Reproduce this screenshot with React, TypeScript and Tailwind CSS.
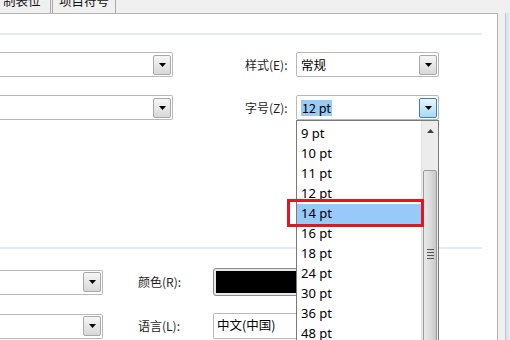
import React from "react";

const cjk = "font-['Microsoft_YaHei','Noto_Sans_CJK_SC',sans-serif]";

function Arrow({ up = false }: { up?: boolean }) {
  return (
    <svg width="7" height="4" viewBox="0 0 7 4" className="block">
      {up ? <path d="M0 4 L3.5 0 L7 4 Z" fill="#404040" /> : <path d="M0 0 L7 0 L3.5 4 Z" fill="#000" />}
    </svg>
  );
}

function DropButton({ hot = false }: { hot?: boolean }) {
  return (
    <div
      className={
        hot
          ? "w-[18px] h-[20px] flex items-center justify-center border border-[#3c7fb1] rounded-[2px] bg-gradient-to-b from-[#eaf6fd] to-[#a7d9f5]"
          : "w-[18px] h-[20px] flex items-center justify-center border border-[#a8a8a8] rounded-[2px] bg-gradient-to-b from-[#f6f6f6] to-[#d8d8d8]"
      }
    >
      <Arrow />
    </div>
  );
}

function Combo({
  className,
  text,
  hot = false,
  selected = false,
  noLeft = false,
}: {
  className: string;
  text?: string;
  hot?: boolean;
  selected?: boolean;
  noLeft?: boolean;
}) {
  return (
    <div
      className={`${className} h-[25px] flex items-center justify-between bg-white border border-[#b9b9b9] rounded-[2px] pr-[1px] ${
        noLeft ? "border-l-0 rounded-l-none" : ""
      }`}
    >
      <span className={`ml-[4px] text-[12.5px] leading-[16px] text-black ${cjk} ${selected ? "bg-[#99cbf6] px-[1px]" : ""}`}>
        {text}
      </span>
      <DropButton hot={hot} />
    </div>
  );
}

const sizes = ["9 pt", "10 pt", "11 pt", "12 pt", "14 pt", "16 pt", "18 pt", "24 pt", "30 pt", "36 pt", "48 pt"];

export default function App() {
  return (
    <div className={`w-[510px] h-[340px] relative overflow-hidden bg-[#f0f0f0] ${cjk}`}>
      {/* tabs, cut off at the top of the shot */}
      <div className="h-[13px] flex overflow-hidden">
        <div className="w-[51px] h-[13px] border-r border-[#a9a9a9] relative bg-[#f0f0f0]">
          <span className="absolute left-[3px] top-[-6px] text-[12.5px] leading-[14px] text-[#111]">制表位</span>
        </div>
        <div className="w-[64px] h-[13px] border-x border-[#a9a9a9] ml-[1px] relative bg-[#f0f0f0]">
          <span className="absolute left-[6px] top-[-6px] text-[12.5px] leading-[14px] text-[#111]">项目符号</span>
        </div>
      </div>

      <div className="flex">
        {/* panel */}
        <div className="w-[498px] h-[327px] bg-white border-t border-r border-[#b4b4b4] flex flex-col">
          <div className="h-[19px]" />
          <div className="w-[482px] h-[2px] bg-[#e5eaf0]" />

          <div className="mt-[17px] flex items-center">
            <Combo className="w-[173px]" noLeft />
            <span className="ml-[72px] w-[51px] text-[12px] text-[#1e1e1e]">样式(E):</span>
            <Combo className="w-[143px]" text="常规" />
          </div>

          <div className="mt-[18px] flex items-center">
            <Combo className="w-[173px]" noLeft />
            <span className="ml-[72px] w-[51px] text-[12px] text-[#1e1e1e]">字号(Z):</span>
            <Combo className="w-[143px]" text="12 pt" hot selected />
          </div>

          <div className="h-[127px]" />
          <div className="w-[482px] h-[2px] bg-[#e5eaf0]" />

          <div className="mt-[19px] flex items-center">
            <Combo className="w-[103px]" noLeft />
            <span className="ml-[35px] w-[75px] text-[12px] text-[#1e1e1e]">颜色(R):</span>
            <div className="w-[100px] h-[28px] border border-[#8a8a8a] rounded-[3px] p-[2px] bg-[#e8e8e8]">
              <div className="w-full h-full bg-black" />
            </div>
          </div>

          <div className="mt-[17px] flex items-center">
            <Combo className="w-[103px]" noLeft />
            <span className="ml-[35px] w-[75px] text-[12px] text-[#1e1e1e]">语言(L):</span>
            <div className="w-[100px] h-[26px] border border-[#b9b9b9] rounded-[2px] bg-white pl-[3px] text-[12.5px] leading-[22px] text-black">
              中文(中国)
            </div>
          </div>
        </div>
        <div className="w-[8px] border-r border-[#c4c4c4]" />
        <div className="w-[3px] bg-[#dbe6f2]" />
      </div>

      {/* dropdown list */}
      <div className="absolute left-[296px] top-[120px] w-[143px] h-[230px] bg-white border border-[#7a7a7a] flex">
        <div className="flex-1 flex flex-col pt-[3px]">
          {sizes.map((s) => (
            <div
              key={s}
              className={`h-[20px] pl-[4px] flex items-center text-[13px] text-black font-['Segoe_UI','Noto_Sans',sans-serif] ${
                s === "14 pt" ? "bg-[#99c9f8]" : ""
              }`}
            >
              {s}
            </div>
          ))}
        </div>
        <div className="w-[17px] bg-[#ececec] border-l border-[#e0e0e0] flex flex-col">
          <div className="h-[20px] flex items-center justify-center">
            <Arrow up />
          </div>
          <div className="mt-[29px] flex-1 mx-[1px] rounded-[2px] border border-[#9a9a9a] bg-gradient-to-r from-[#e8e8e8] via-[#dcdcdc] to-[#c8c8c8] flex flex-col items-center pt-[78px] gap-[2px]">
            <div className="w-[7px] h-[1px] bg-[#555]" />
            <div className="w-[7px] h-[1px] bg-[#555]" />
            <div className="w-[7px] h-[1px] bg-[#555]" />
            <div className="w-[7px] h-[1px] bg-[#555]" />
          </div>
        </div>
      </div>

      {/* red highlight */}
      <div className="absolute left-[287px] top-[199px] w-[137px] h-[28px] border-[3px] border-[#e3151f]" />
    </div>
  );
}
